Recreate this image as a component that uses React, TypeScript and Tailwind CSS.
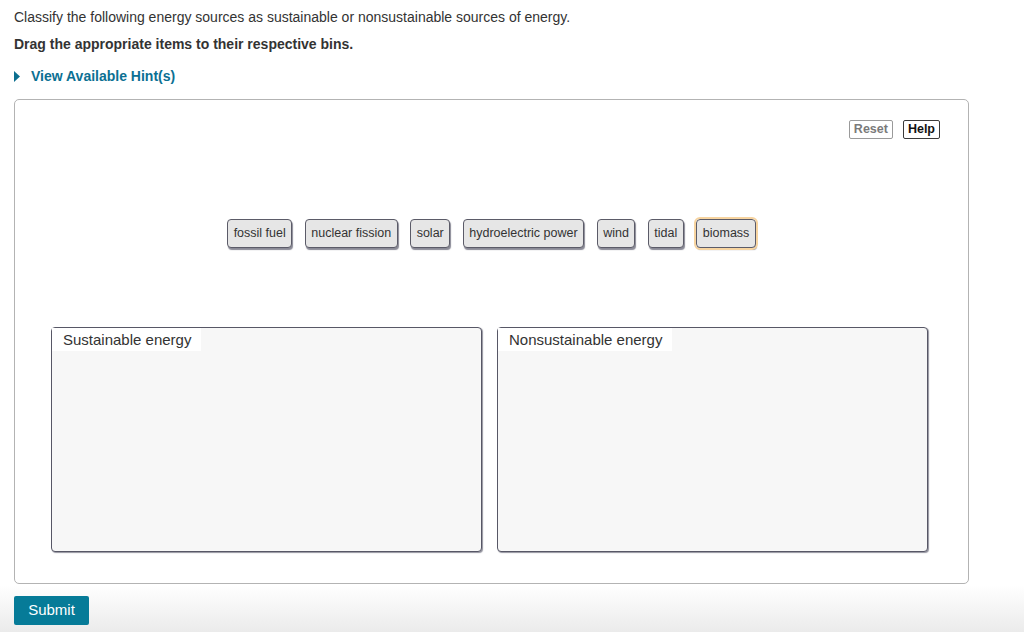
import type { ReactNode } from "react";

const ITEMS = ["fossil fuel", "nuclear fission", "solar", "hydroelectric power", "wind", "tidal", "biomass"];

function Chip({ label, active }: { label: string; active?: boolean }) {
  return (
    <div
      className={`flex h-[29px] items-center rounded-[4px] border-[1.5px] border-[#5b5b68] bg-[#e6e6e6] px-[5.5px] text-[12.5px] text-[#333] shadow-[1px_2px_1px_rgba(60,60,80,0.6)] ${
        active ? "outline outline-[2px] outline-[#f7d4a0]" : ""
      }`}
    >
      {label}
    </div>
  );
}

function Bin({ title, children }: { title: string; children?: ReactNode }) {
  return (
    <div className="h-[225px] w-[431px] rounded-[4px] border-[1.5px] border-[#575766] bg-[#f7f7f7] shadow-[1px_1px_1px_rgba(60,60,80,0.55)]">
      <div className="inline-block h-[23px] bg-white pl-[11px] pr-[10px] text-[15px] leading-[23px] text-[#333]">{title}</div>
      {children}
    </div>
  );
}

export default function App() {
  return (
    <div className="flex min-h-[632px] w-[1024px] flex-col bg-white font-['Liberation_Sans',Arial,sans-serif] text-[#333]">
      <div className="px-[14px]">
        <p className="pt-[7px] text-[14px] leading-[20px]">
          Classify the following energy sources as sustainable or nonsustainable sources of energy.
        </p>
        <p className="mt-[7px] text-[14px] font-bold leading-[20px]">Drag the appropriate items to their respective bins.</p>
        <div className="mt-[12px] flex h-[20px] items-center text-[14px] font-bold text-[#0c7093]">
          <svg width="6" height="11" viewBox="0 0 6 11" className="mr-[11px]">
            <path d="M0 0 L6 5.5 L0 11 Z" fill="#0c6f8f" />
          </svg>
          View Available Hint(s)
        </div>

        <div className="mt-[13px] w-[955px] rounded-[5px] border border-[#b3b3b3] pb-[31px] pt-[20px]">
          <div className="flex justify-end gap-[10px] pr-[28px]">
            <button className="h-[19px] rounded-[2px] border border-[#9a9a9a] px-[4px] text-[12.5px] font-bold leading-[17px] text-[#7a7a7a]">
              Reset
            </button>
            <button className="h-[19px] rounded-[2px] border border-[#3a3a3a] px-[4px] text-[12.5px] font-bold leading-[17px] text-[#111]">
              Help
            </button>
          </div>
          <div className="mt-[80px] flex justify-center gap-[12.5px]">
            {ITEMS.map((item) => (
              <Chip key={item} label={item} active={item === "biomass"} />
            ))}
          </div>
          <div className="mt-[79px] flex gap-[15px] pl-[36px]">
            <Bin title="Sustainable energy" />
            <Bin title="Nonsustainable energy" />
          </div>
        </div>
      </div>
      <div className="mt-[1px] flex-1 bg-gradient-to-b from-white to-[#ebebeb] px-[14px] pt-[11px]">
        <button className="h-[29px] w-[75px] rounded-[2px] bg-[#067b98] text-[15px] text-white">Submit</button>
      </div>
    </div>
  );
}
